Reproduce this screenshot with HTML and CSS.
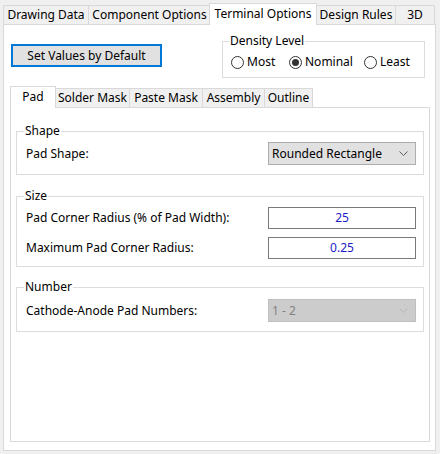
FILE: index.html
```html
<!DOCTYPE html>
<html>
<head>
<meta charset="utf-8">
<link rel="stylesheet" href="styles.css">
</head>
<body>
<div class="tabs">
  <div class="tab t-drawing">Drawing Data</div>
  <div class="tab t-component">Component Options</div>
  <div class="tab tab-active t-terminal">Terminal Options</div>
  <div class="tab t-rules">Design Rules</div>
  <div class="tab t-3d">3D</div>
</div>
<div class="panel">
  <div class="top-row">
    <button class="btn-default">Set Values by Default</button>
    <fieldset class="group density">
      <legend>Density Level</legend>
      <div class="radios">
        <div class="radio r-most"><span class="circle"></span><span>Most</span></div>
        <div class="radio r-nominal"><span class="circle checked"></span><span>Nominal</span></div>
        <div class="radio"><span class="circle"></span><span>Least</span></div>
      </div>
    </fieldset>
  </div>
  <div class="subtabs">
    <div class="tab tab-active s-pad">Pad</div>
    <div class="tab s-solder">Solder Mask</div>
    <div class="tab s-paste">Paste Mask</div>
    <div class="tab s-assembly">Assembly</div>
    <div class="tab s-outline">Outline</div>
  </div>
  <div class="subpanel">
    <fieldset class="group shape">
      <legend>Shape</legend>
      <div class="row">
        <span class="label">Pad Shape:</span>
        <div class="combo">
          <span>Rounded Rectangle</span>
          <svg class="chev" width="9" height="5" viewBox="0 0 9 5"><polyline points="0.5,0.5 4.5,4.5 8.5,0.5" fill="none" stroke="#606060" stroke-width="1"/></svg>
        </div>
      </div>
    </fieldset>
    <fieldset class="group size">
      <legend>Size</legend>
      <div class="row">
        <span class="label">Pad Corner Radius (% of Pad Width):</span>
        <div class="edit">25</div>
      </div>
      <div class="row">
        <span class="label">Maximum Pad Corner Radius:</span>
        <div class="edit">0.25</div>
      </div>
    </fieldset>
    <fieldset class="group number">
      <legend>Number</legend>
      <div class="row">
        <span class="label">Cathode-Anode Pad Numbers:</span>
        <div class="combo combo-disabled">
          <span>1 - 2</span>
          <svg class="chev" width="9" height="5" viewBox="0 0 9 5"><polyline points="0.5,0.5 4.5,4.5 8.5,0.5" fill="none" stroke="#b4b4b4" stroke-width="1"/></svg>
        </div>
      </div>
    </fieldset>
  </div>
</div>
</body>
</html>
```
FILE: styles.css
```css
* { box-sizing: border-box; }
html, body {
  margin: 0;
  padding: 0;
}
body {
  background: #f0f0f0;
  font-family: "Noto Sans", "Open Sans", sans-serif;
  font-size: 12px;
  line-height: 16px;
  color: #000;
  width: 440px;
  height: 454px;
  overflow: hidden;
}

/* tabs */
.tabs {
  display: flex;
  align-items: flex-end;
  padding: 3px 0 0 3px;
}
.tab {
  height: 19px;
  border: 1px solid #d9d9d9;
  border-bottom: none;
  background: #f0f0f0;
  margin-right: -1px;
  text-align: center;
  line-height: 18px;
  white-space: nowrap;
}
.tab-active {
  position: relative;
  z-index: 1;
  height: 22px;
  margin-bottom: -1px;
  margin-left: -1px;
  padding-top: 1px;
  background: #fff;
}
.t-drawing { width: 86px; }
.t-component { width: 123px; }
.t-terminal { width: 108px; }
.t-rules { width: 80px; }
.t-3d { width: 40px; }

.panel {
  margin-left: 3px;
  width: 433px;
  height: 427px;
  border: 1px solid #d9d9d9;
  background: #fff;
}
.top-row {
  display: flex;
  align-items: flex-start;
  padding: 8px 10px 0 7px;
}
.btn-default {
  margin: 11px 0 0 0;
  width: 151px;
  height: 23px;
  border: 2px solid #0078d7;
  background: #e1e1e1;
  font: inherit;
  color: #000;
  padding: 0;
  line-height: 18px;
}

.group {
  margin: 0;
  border: 1px solid #dcdcdc;
  padding: 0 7px 0 9px;
  min-width: 0;
}
.group legend {
  margin-left: -2px;
  padding: 0 1px;
  line-height: 16px;
}
.density {
  margin-left: auto;
  width: 203px;
  height: 45px;
  padding-left: 8px;
}
.radios {
  display: flex;
  align-items: center;
  margin-top: 5px;
  height: 16px;
}
.radio {
  display: flex;
  align-items: center;
  gap: 3px;
}
.r-most { width: 58px; }
.r-nominal { width: 75px; }
.circle {
  width: 13px;
  height: 13px;
  border: 1px solid #333;
  border-radius: 50%;
  background: #fff;
  display: flex;
  align-items: center;
  justify-content: center;
}
.circle.checked::after {
  content: "";
  width: 7px;
  height: 7px;
  border-radius: 50%;
  background: #333;
}

/* sub tabs */
.subtabs {
  display: flex;
  align-items: flex-end;
  margin-top: 8px;
  padding-left: 6px;
}
.subtabs .tab-active { margin-left: 0; }
.s-pad { width: 46px; }
.s-solder { width: 75px; }
.s-paste { width: 74px; }
.s-assembly { width: 63px; }
.s-outline { width: 49px; }

.subpanel {
  margin-left: 6px;
  width: 420px;
  height: 335px;
  border: 1px solid #d9d9d9;
  background: #fff;
  padding: 0 5px;
}
.shape {
  margin-top: 15px;
  padding-top: 3px;
  padding-bottom: 9px;
}
.size {
  margin-top: 13px;
  padding-top: 3px;
  padding-bottom: 7px;
  display: flex;
  flex-direction: column;
  gap: 8px;
}
.number {
  margin-top: 12px;
  padding-top: 4px;
  padding-bottom: 9px;
}
.row {
  display: flex;
  align-items: center;
  justify-content: space-between;
}
.combo {
  width: 148px;
  height: 23px;
  border: 1px solid #adadad;
  background: #e1e1e1;
  display: flex;
  align-items: center;
  justify-content: space-between;
  padding: 0 7px 0 3px;
}
.combo-disabled {
  background: #cccccc;
  border-color: #bfbfbf;
  color: #838383;
}
.chev { display: block; }
.edit {
  width: 148px;
  height: 22px;
  border: 1px solid #7a7a7a;
  background: #fff;
  text-align: center;
  line-height: 20px;
  color: #1c1cc8;
}
```
